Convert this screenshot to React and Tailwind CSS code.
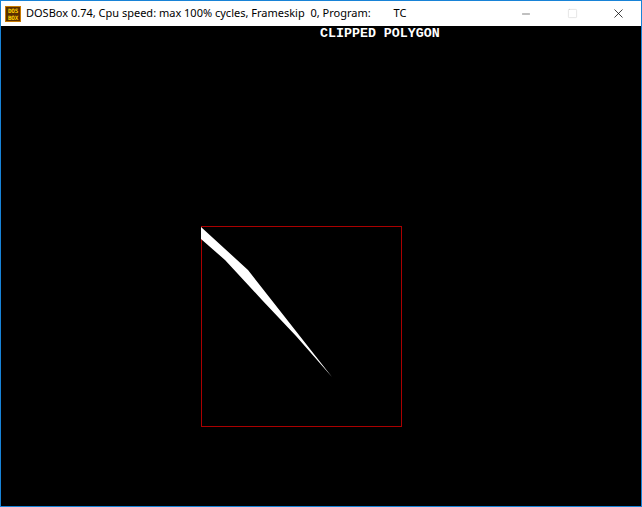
import React from 'react';
import { Minus, Square, X } from 'lucide-react';

function DosIcon() {
  return (
    <div className="w-[16px] h-[16px] bg-[#5a3000] border border-[#c87a00] flex flex-col items-center justify-center leading-none text-[#ffd200] font-bold text-[6px] tracking-[-0.3px]"
      style={{ fontFamily: '"DejaVu Sans Mono", monospace' }}>
      <span className="leading-[7px]">DOS</span>
      <span className="leading-[7px]">BOX</span>
    </div>
  );
}

export default function App() {
  return (
    <div className="w-[642px] h-[507px] border border-[#1883d7] flex flex-col bg-black">
      <div className="h-[25px] bg-white flex items-center pl-[4px] text-black">
        <DosIcon />
        <span className="ml-[5px] whitespace-pre text-[11px] text-[#000]" style={{ fontFamily: '"Noto Sans", "Open Sans", sans-serif' }}>
          {'DOSBox 0.74, Cpu speed: max 100% cycles, Frameskip  0, Program:        TC'}
        </span>
        <div className="ml-auto flex items-center h-full">
          <div className="w-[46px] h-full flex items-center justify-center">
            <Minus size={12} strokeWidth={1} color="#000" />
          </div>
          <div className="w-[46px] h-full flex items-center justify-center">
            <Square size={11} strokeWidth={1} color="#c8c8c8" />
          </div>
          <div className="w-[46px] h-full flex items-center justify-center">
            <X size={15} strokeWidth={1.2} color="#000" />
          </div>
        </div>
      </div>
      <div className="relative w-[640px] h-[480px] bg-black">
        <div className="pl-[319px] pt-[1px] text-white font-bold text-[13.3px] leading-[14px] whitespace-pre"
          style={{ fontFamily: '"Liberation Mono", monospace' }}>
          CLIPPED POLYGON
        </div>
        <svg className="absolute left-0 top-0" width="640" height="480" shapeRendering="crispEdges">
          <rect x="200.5" y="200.5" width="200" height="200" fill="none" stroke="#aa0000" strokeWidth="1" />
          <polygon
            points="200,201 247,244 331,351 295,310 261,274 224,234 200,213"
            fill="#ffffff"
            shapeRendering="auto"
          />
        </svg>
      </div>
    </div>
  );
}
